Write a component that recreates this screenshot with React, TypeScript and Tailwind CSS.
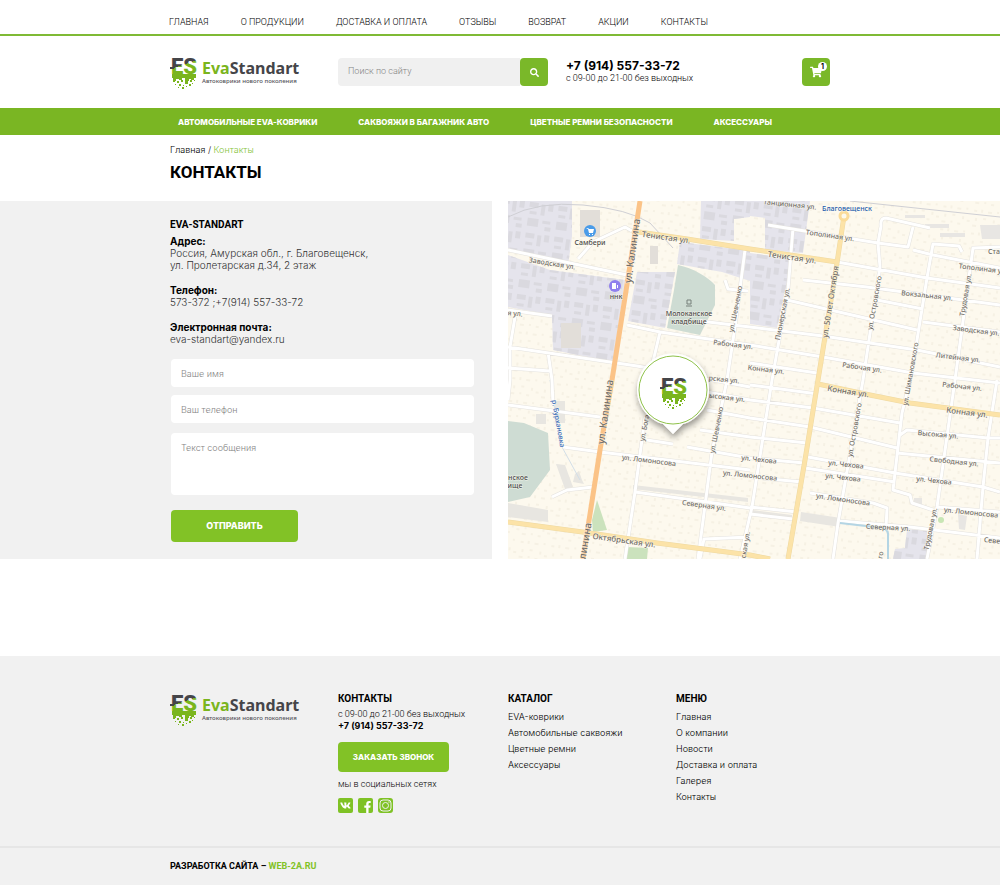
import React from 'react';
import { FaFacebookF, FaSearch, FaShoppingCart, FaVk } from 'react-icons/fa';

const topLinks = ['Главная', 'О продукции', 'Доставка и оплата', 'Отзывы', 'Возврат', 'Акции', 'Контакты'];

const categories = ['Автомобильные EVA-коврики', 'Саквояжи в багажник авто', 'Цветные ремни безопасности', 'Аксессуары'];

const catalogLinks = ['EVA-коврики', 'Автомобильные саквояжи', 'Цветные ремни', 'Аксессуары'];

const menuLinks = ['Главная', 'О компании', 'Новости', 'Доставка и оплата', 'Галерея', 'Контакты'];

// [x, y, size]
const crumbs = [
  [2, 24, 2], [6, 25, 2], [10, 24, 2], [14, 25, 3], [19, 24, 2], [23, 24, 1], [4, 28, 1],
  [8, 28, 2], [12, 29, 1], [18, 28, 2], [21, 27, 1], [7, 31, 1], [11, 31, 2], [15, 30, 1],
];

const Monogram: React.FC = () => (
  <g>
    <text
      x="13"
      y="18"
      textAnchor="middle"
      fontSize="22"
      fontWeight="900"
      fontFamily="Roboto, sans-serif"
      fill="url(#es-fill)"
    >
      ES
    </text>
    <path d="M-1 11h4v2h-4z" fill="#454549" />
    <path d="M1 18h24v4h-2v2h-3v-1h-2v2h-4v-3h-3v2H8v-1H5v2H2v-3H1z" fill="#7ab51d" />
    {crumbs.map(([x, y, s]) => (
      <rect key={`${x}-${y}`} x={x} y={y} width={s} height={s} fill="#7ab51d" />
    ))}
  </g>
);

const Logo: React.FC = () => (
  <a href="#" className="flex items-start gap-1">
    <svg viewBox="-1 0 28 33" className="h-[33px] w-[28px] overflow-visible" aria-hidden="true">
      <Monogram />
    </svg>
    <span className="pt-1">
      <span className="block font-['Noto_Sans'] text-base leading-4 font-bold text-[#454549]">
        <span className="text-[#7ab51d]">Eva</span>Standart
      </span>
      <span className="block pt-px font-['Noto_Sans'] text-[6px] leading-2 font-medium whitespace-nowrap text-[#55555a]">
        Автоковрики нового поколения
      </span>
    </span>
  </a>
);

const areas = [
  'M508 201h64v35l-4 30-60-18z',
  'M508 255l42 15 75 10-12 82-60-12-1-35-44-8z',
  'M701 201h49v16l-16 2v22l-34-2z',
  'M680 242l70 9v30l-28-9-45-8z',
  'M637 272h38l-10 56-37-7z',
  'M750 201h60l-7 52-38-3v-32l-15-2z',
  'M750 253l42 6-15 69-27-4z',
  'M907 529l20 2v28h-34l2-10 10-1z',
];

const greens = [
  'M678 265c15 3 30 12 37 20v20l-15 30-33-7 7-38z',
  'M508 421l16 2 24 10 2 37-20 27-22 5z',
];

const parks = ['M597 500l10 30-14 2-1-12z', 'M627 547l21 1-1 11h-22z'];

const streets = [
  'M508 250l119 25', 'M578 259l15-17 32-15 7 4', 'M508 310l44 6', 'M515 317l-5 30v33l-2 20',
  'M508 347l129 19 113 21', 'M508 368l42 3', 'M548 352l4 28 1 25', 'M627 325l33 7 90 13 73 12 90 16 87 10',
  'M660 332l-8 34', 'M745 250l-10 77-8 53-15 72-14 107', 'M725 280l3 9 20 2', 'M700 321l50 6 73 9 94 14 83 17',
  'M793 228l-5 62-16 90-20 127-12 52', 'M768 225l110 18 30 4 5-20', 'M930 228l-44-10q-6 0-5 8l-3 17 2 24-17 113-25 143-5 36',
  'M913 250l20 5 67 13', 'M837 262l90 16 73 10', 'M962 252l-3-6-26-2-6 34-10 62-7 40-8 33-9 77 17 5 2 8 21 7',
  'M1000 247l-27 1-18 132-18 127-10 52', 'M803 280l64 7 133 18', 'M787 300l130 30', 'M877 300l46 9',
  'M923 322l77 10', 'M750 363l67 10', 'M750 385l68 9', 'M707 392l43 8 63 8 87 15', 'M707 410l43 8 60 9 87 21',
  'M700 430l50 7 57 6', 'M687 447l63 11 54 5', 'M808 457l87 16 88 14 17 5', 'M805 468l90 14', 'M750 477l52 5',
  'M897 453l103 10', 'M900 435l7-5 81 8h12', 'M810 493l63 10 14 5-1 20', 'M937 507l63 5', 'M750 507l47 5',
  'M750 514l43 5', 'M840 521l70 6 90 11', 'M997 380l-9 58-5 49-6 72', 'M508 405l92 12', 'M563 447l37 5 150 18',
  'M552 497l15-7 26-3', 'M645 417l-10 75-10 67', 'M635 492l115 16', 'M647 440l26 4', 'M700 559l4-20 46-2',
];

const avenues = [
  'M632 231l55 8 63 10 87 13', 'M844 216l-7 47-19 117-13 80-17 99', 'M818 384l52 11 40 8 90 12',
  'M508 522l82 11 67 10 93 12 20 4',
];

// [name, x, y, size, angle]
const labels: [string, number, number, number, number][] = [
  ['Тенистая ул.', 666, 238, 8, 8], ['Тенистая ул.', 792, 258, 8, 8], ['Заводская ул.', 552, 264, 7, 9],
  ['я ул.', 515, 314, 7, 5], ['ул. Шевченко', 736, 309, 7, -79], ['ул. Шевченко', 717, 430, 7, -79],
  ['Рабочая ул.', 733, 345, 7, 7], ['Пионерская ул.', 783, 314, 7, -79], ['танционная ул.', 790, 205, 7, 6],
  ['Тополиная ул.', 830, 236, 7, 8], ['Тополиная у', 980, 269, 7, 7], ['Ста', 994, 252, 7, 0],
  ['ул. Островского', 875, 303, 7, -80], ['Вокзальная ул.', 927, 296, 7, 6], ['Трудовая ул.', 966, 295, 7, -80],
  ['Заводская ул.', 976, 331, 7, 7], ['Литейная ул.', 958, 358, 7, 7], ['Рабочая ул.', 862, 368, 7, 8],
  ['ул. Шимановского', 911, 374, 7, -80], ['Конная ул.', 766, 370, 7, 7], ['рская ул.', 724, 380, 7, 6],
  ['ысокая ул.', 727, 398, 7, 7], ['Рабочая ул.', 962, 387, 7, 6], ['Конная ул.', 848, 392, 8, 9],
  ['Конная ул.', 967, 413, 8, 7], ['Высокая ул.', 938, 435, 7, 5], ['ул. Островского', 855, 430, 7, -80],
  ['Свободная ул.', 954, 462, 7, 6], ['ул. Чехова', 759, 460, 7, 6], ['ул. Чехова', 846, 465, 7, 6],
  ['ул. Чехова', 843, 478, 7, 6], ['ул. Чехова', 934, 481, 7, 6], ['ул. Ломоносова', 750, 476, 7, 6],
  ['ул. Ломоносова', 843, 500, 7, 8], ['ул. Ломоносова', 971, 513, 7, 6], ['ул. Ломоносова', 649, 461, 7, 7],
  ['ул. Бога', 645, 428, 7, -79], ['Северная ул.', 704, 506, 7, 8], ['Северная ул.', 888, 528, 7, 3],
  ['Трудовая ул.', 931, 529, 7, -78], ['Севе', 992, 541, 7, 6], ['Октябрьская ул.', 624, 541, 8, 8],
  ['ская ул.', 746, 545, 7, -80], ['го', 881, 555, 7, -80], ['ул. Калинина', 633, 251, 10, -82],
  ['ул. Калинина', 606, 412, 10, -82], ['линина', 586, 541, 10, -80], ['ул. 50 лет Октября', 831, 302, 8, -81],
];

const StreetMap: React.FC = () => (
  <svg
    viewBox="508 201 492 358"
    preserveAspectRatio="xMidYMid slice"
    className="h-[358px] w-full bg-[#fdf9ee]"
    role="img"
    aria-label="Карта проезда"
  >
    <defs>
      <linearGradient id="es-fill" x1="0" y1="0" x2="0.35" y2="1">
        <stop offset="0.53" stopColor="#454549" />
        <stop offset="0.53" stopColor="#7ab51d" />
      </linearGradient>
      <pattern id="sheds" width="29" height="31" patternUnits="userSpaceOnUse" patternTransform="rotate(8)">
        <path d="M2 2h9v5H2zM14 3h4v11h-4zM21 2h5v7h-5zM3 11h7v3H3zM2 18h11v8H2zM17 19h8v3h-8zM20 25h6v4h-6z" fill="#dad9df" />
      </pattern>
      <pattern id="houses" width="31" height="23" patternUnits="userSpaceOnUse" patternTransform="rotate(8)">
        <path d="M2 3h3v2H2zM9 2h2v3H9zM16 3h4v2h-4zM25 2h2v2h-2zM4 11h2v3H4zM12 10h3v2h-3zM22 11h2v3h-2zM27 14h3v2h-3zM2 18h4v2H2zM11 17h2v2h-2zM18 18h3v2h-3z" fill="#f6f1e4" />
      </pattern>
      <filter id="pin-shadow" x="-30%" y="-30%" width="160%" height="170%">
        <feDropShadow dx="1" dy="4" stdDeviation="3" floodColor="#000" floodOpacity="0.4" />
      </filter>
    </defs>

    <rect x="508" y="201" width="492" height="358" fill="url(#houses)" />
    <path d={areas.join('')} fill="#e5e4ec" />
    <path d={areas.join('')} fill="url(#sheds)" />
    <path d="M580 210h20v27h-20zM561 323h20v25h-20zM650 246h8v18h-8z" fill="#e2ded9" />
    <path d={greens.join('')} fill="#cedcd3" />
    <path d={parks.join('')} fill="#cbe2bd" />
    <circle cx="941" cy="520" r="3" fill="#c8e6b5" />
    <path
      d="M508 503l40 7v12l-40-5zM556 464l9 1 8 22-8 2zM575 474l4-3 3 9 2 4-11-2zM633 485l115 13v4l-115-13zM752 510l40 5v3l-40-5zM801 512l40 6-1 9-40-6z"
      fill="#e8e6e1"
    />
    <path d="M555 401h10v22h-10zM536 414h10v10h-10z" fill="#e8e6e1" />
    <path d="M905 215h20v3h-20zM925 224h24v4h-24zM940 233h25v4h-25zM980 225h20v14h-18zM914 498h8v6h-8zM958 514l9 2-2 14-6-1z" fill="#e8e6e3" />

    <g fill="none" strokeLinejoin="round">
      <path d="M508 217q30-16 75-12t67 18l23 25M850 201l150 16" stroke="#cfcfd4" strokeWidth="1" />
      <path d="M550 380l12 67 18 33" stroke="#d3dfe8" strokeWidth="1" />
      <path d={streets.join('')} stroke="#e4e2de" strokeWidth="4" />
      <path d={streets.join('')} stroke="#ffffff" strokeWidth="3" />
      <path d="M840 523l43 5q6 2 5 9v22" stroke="#b4d5e4" strokeWidth="2" />
      <path d={avenues.join('')} stroke="#eed9a2" strokeWidth="5" />
      <path d={avenues.join('')} stroke="#fce3a8" strokeWidth="4" />
      <path d="M640 201l-12 77-16 102-12 70-17 109" stroke="#fbc387" strokeWidth="5" />
      <circle cx="844" cy="216" r="4" fill="#fdf9ec" stroke="#fbdc9a" strokeWidth="3" />
    </g>

    <g
      fontFamily="'Noto Sans', sans-serif"
      fontWeight="500"
      textAnchor="middle"
      fill="#726e68"
      stroke="#fffdf5"
      strokeOpacity="0.7"
      strokeWidth="1"
      paintOrder="stroke"
    >
      {labels.map(([name, x, y, size, angle]) => (
        <text key={`${x}-${y}`} x={x} y={y} fontSize={size} transform={`rotate(${angle} ${x} ${y})`} dominantBaseline="middle">
          {name}
        </text>
      ))}
      <g fontSize="7" fill="#4d4b49">
        <text x="590" y="245">Самбери</text>
        <text x="616" y="299">ннк</text>
        <text x="689" y="316">Молоканское</text>
        <text x="689" y="324">кладбище</text>
        <text x="518" y="480">нское</text>
        <text x="515" y="488">ище</text>
      </g>
      <text x="847" y="211" fontSize="7" fill="#1f5dab">Благовещенск</text>
      <text x="556" y="424" fontSize="7" fill="#3b6cb8" transform="rotate(80 556 424)">р. Бурхановка</text>
    </g>

    <circle cx="590" cy="231" r="6" fill="#4a9be8" />
    <path d="M586 228h2l1 1h5l-1 4h-4l-1-4" fill="#fff" />
    <path d="M589 234h1v1h-1zM592 234h1v1h-1z" fill="#fff" />
    <circle cx="615" cy="286" r="6" fill="#9080ee" />
    <path d="M612 283h4v6h-4zM617 285h1v3h-1z" fill="#fff" />
    <path d="M687 300h4v4h-4zM686 306h6" fill="none" stroke="#76807b" strokeWidth="1" />

    <g filter="url(#pin-shadow)">
      <path d="M673 434l-10-10a36 36 0 1 1 20 0z" fill="#ffffff" />
    </g>
    <circle cx="673" cy="390" r="34" fill="#ffffff" stroke="#8fc24a" strokeWidth="1" />
    <g transform="translate(661 376)">
      <Monogram />
    </g>
  </svg>
);

const InstagramBadge: React.FC = () => (
  <svg viewBox="0 0 15 15" className="size-[15px]" aria-hidden="true">
    <rect width="15" height="15" rx="3" fill="#7fc225" />
    <g fill="none" stroke="#f1f1f1">
      <rect x="2" y="2" width="11" height="11" rx="3" />
      <circle cx="7.5" cy="7.5" r="3" />
    </g>
    <circle cx="11" cy="4" r="0.7" fill="#f1f1f1" />
  </svg>
);

const FooterColumn: React.FC<{ title: string; links: string[] }> = ({ title, links }) => (
  <nav aria-label={title}>
    <h2 className="font-['Roboto'] text-[10px] leading-3 font-bold uppercase">{title}</h2>
    <ul className="mt-1 text-[9px] leading-4">
      {links.map((link) => (
        <li key={link}>
          <a href="#" className="whitespace-nowrap hover:text-[#7ab51d]">{link}</a>
        </li>
      ))}
    </ul>
  </nav>
);

const App: React.FC = () => {
  return (
    <div className="bg-white font-['Inter',sans-serif] font-light text-black">
      <header>
        <nav className="border-b-2 border-[#7fba35]" aria-label="Основное меню">
          <ul className="mx-auto flex h-[34px] max-w-[662px] gap-8 pt-4 font-['Roboto'] text-[9px] leading-3 uppercase">
            {topLinks.map((link) => (
              <li key={link}>
                <a href="#" className="whitespace-nowrap hover:text-[#7ab51d]">{link}</a>
              </li>
            ))}
          </ul>
        </nav>

        <div className="mx-auto flex h-[72px] max-w-[660px] items-center">
          <div className="w-[168px] shrink-0">
            <Logo />
          </div>
          <form className="flex h-7 w-[210px]" role="search">
            <input
              type="search"
              aria-label="Поиск по сайту"
              placeholder="Поиск по сайту"
              className="min-w-0 flex-1 rounded-l-sm bg-[#f0f0f0] px-2.5 font-['Roboto'] text-[9px] placeholder:text-[#858585] focus:outline-none"
            />
            <button type="button" aria-label="Найти" className="flex w-7 items-center justify-center rounded-sm bg-[#7ab829] text-white">
              <FaSearch className="size-[9px]" />
            </button>
          </form>
          <div className="ml-[18px]">
            <a href="tel:+79145573372" className="block text-[12px] leading-3 font-bold whitespace-nowrap">+7 (914) 557-33-72</a>
            <p className="font-['Roboto'] text-[9px] leading-3 whitespace-nowrap">с 09-00 до 21-00 без выходных</p>
          </div>
          <button type="button" aria-label="Корзина" className="relative ml-auto flex size-7 items-center justify-center rounded-sm bg-[#7ab829] text-white">
            <FaShoppingCart className="size-3" />
            <span className="absolute top-1 right-[3px] size-[9px] rounded-full bg-white text-center text-[7px] leading-[9px] font-bold text-black">1</span>
          </button>
        </div>

        <nav className="bg-[#7ab623]" aria-label="Категории">
          <ul className="mx-auto flex h-[27px] max-w-[660px] items-center gap-[41px] pl-2 text-[8px] leading-3 font-extrabold text-white uppercase">
            {categories.map((category) => (
              <li key={category}>
                <a href="#" className="whitespace-nowrap">{category}</a>
              </li>
            ))}
          </ul>
        </nav>
      </header>

      <main>
        <div className="mx-auto h-[66px] max-w-[660px] pt-[9px]">
          <nav className="text-[9px] leading-3" aria-label="Навигация">
            <a href="#">Главная</a> / <span className="text-[#86c43c]">Контакты</span>
          </nav>
          <h1 className="mt-1 font-['Roboto'] text-[17px] leading-6 font-bold uppercase">Контакты</h1>
        </div>

        <section className="grid grid-cols-2 gap-4">
          <div className="flex justify-end bg-[#f1f1f1] pt-[18px] pr-[18px] pb-4">
            <div className="w-[304px]">
              <h2 className="font-['Roboto'] text-[10px] leading-3 font-bold">EVA-STANDART</h2>
              <address className="mt-1 flex flex-col gap-[13px] text-[10px] leading-3 text-[#333333] not-italic">
                <div>
                  <h3 className="font-bold text-black">Адрес:</h3>
                  <p>Россия, Амурская обл., г. Благовещенск,<br />ул. Пролетарская д.34, 2 этаж</p>
                </div>
                <div>
                  <h3 className="font-bold text-black">Телефон:</h3>
                  <p>573-372 ;+7(914) 557-33-72</p>
                </div>
                <div>
                  <h3 className="font-bold text-black">Электронная почта:</h3>
                  <a href="mailto:eva-standart@yandex.ru">eva-standart@yandex.ru</a>
                </div>
              </address>
              <form className="mt-3.5 flex flex-col gap-2 pl-px text-[9px]">
                <input type="text" aria-label="Ваше имя" placeholder="Ваше имя" className="h-7 rounded-sm bg-white px-2.5 placeholder:text-[#858585]" />
                <input type="tel" aria-label="Ваш телефон" placeholder="Ваш телефон" className="h-7 rounded-sm bg-white px-2.5 placeholder:text-[#858585]" />
                <textarea
                  aria-label="Текст сообщения"
                  placeholder="Текст сообщения"
                  className="mt-0.5 h-[62px] resize-none rounded-sm bg-white px-2.5 py-2 placeholder:text-[#858585]"
                />
                <button type="button" className="mt-[7px] h-8 w-[127px] rounded-sm bg-[#82c226] text-[9px] font-extrabold text-white uppercase">
                  Отправить
                </button>
              </form>
            </div>
          </div>
          <StreetMap />
        </section>
      </main>

      <footer className="mt-[97px] bg-[#f1f1f1]">
        <div className="mx-auto grid h-[190px] max-w-[660px] grid-cols-[168px_170px_168px_1fr] pt-[37px]">
          <Logo />
          <div className="font-['Roboto']">
            <h2 className="text-[10px] leading-3 font-bold uppercase">Контакты</h2>
            <p className="mt-[3px] text-[9px] leading-3 whitespace-nowrap">с 09-00 до 21-00 без выходных</p>
            <a href="tel:+79145573372" className="block font-['Inter'] text-[9px] leading-3 font-bold">+7 (914) 557-33-72</a>
            <button type="button" className="mt-2.5 h-[30px] w-[111px] rounded-sm bg-[#82c226] font-['Inter'] text-[8px] font-extrabold text-white uppercase">
              Заказать звонок
            </button>
            <p className="mt-1.5 text-[9px] leading-3 whitespace-nowrap">мы в социальных сетях</p>
            <div className="mt-2 flex gap-[5px]">
              <a href="#" aria-label="ВКонтакте" className="flex size-[15px] items-center justify-center rounded-xs bg-[#7fc225] text-white">
                <FaVk className="size-[11px]" />
              </a>
              <a href="#" aria-label="Facebook" className="flex size-[15px] items-end justify-center rounded-xs bg-[#7fc225] pl-1 text-white">
                <FaFacebookF className="size-3" />
              </a>
              <a href="#" aria-label="Instagram">
                <InstagramBadge />
              </a>
            </div>
          </div>
          <FooterColumn title="Каталог" links={catalogLinks} />
          <FooterColumn title="Меню" links={menuLinks} />
        </div>
        <div className="border-t-2 border-[#e6e6e6]">
          <p className="mx-auto h-[37px] max-w-[660px] pt-3 font-['Roboto'] text-[9px] leading-3 font-bold uppercase">
            Разработка сайта – <a href="#" className="text-[#82c226]">web-2a.ru</a>
          </p>
        </div>
      </footer>
    </div>
  );
};

export default App;
